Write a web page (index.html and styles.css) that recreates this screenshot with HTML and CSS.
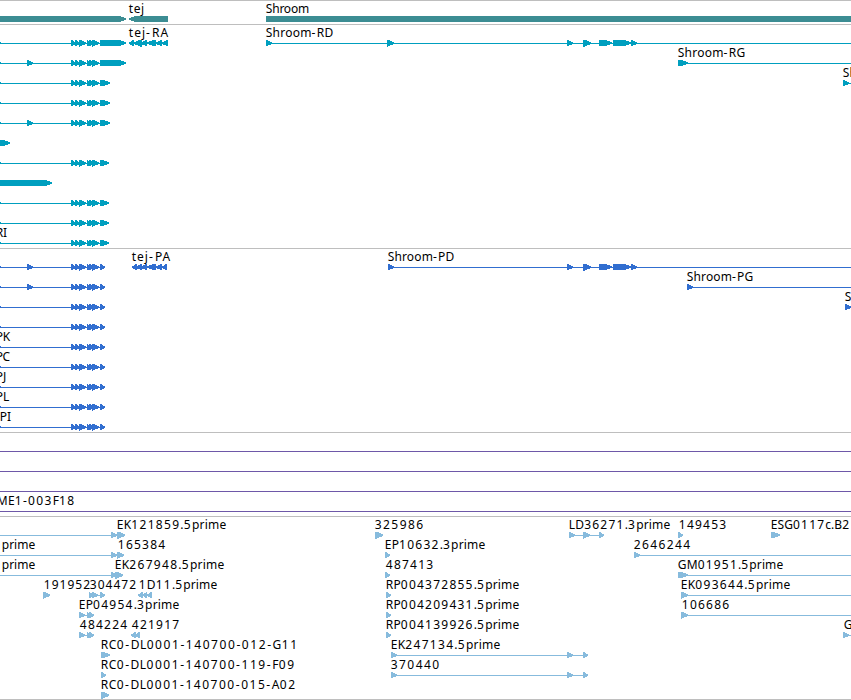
FILE: index.html
```
<!DOCTYPE html>
<html lang="en">
<head>
  <meta charset="UTF-8" />
  <title>Genome Browser - Shroom</title>
  <link rel="stylesheet" href="styles.css">
</head>
<body>

  <main class="browser">
    <section class="track gene"><svg id="gene"></svg></section>
    <section class="track mrna"><svg id="mrna"></svg></section>
    <section class="track protein"><svg id="protein"></svg></section>
    <section class="track bac"><svg id="bac"></svg></section>
    <section class="track est"><svg id="est"></svg></section>
  </main>

  <script src="script.js"></script>
</body>
</html>
```

FILE: styles.css
```
body {
  margin: 0;
  background: #fff;
  overflow: hidden;
}

.browser {
  display: flex;
  flex-direction: column;
  width: 851px;
  height: 700px;
  box-sizing: border-box;
  border-bottom: 1px solid #bebebe;
}

.track {
  box-sizing: border-box;
  border-top: 1px solid #bebebe;
  overflow: hidden;
}

.track svg {
  display: block;
  width: 100%;
  height: 100%;
  fill: currentColor;
}

.gene {
  height: 24px;
  color: #3c8d93;
}

.mrna {
  height: 224px;
  color: #009fbf;
}

.protein {
  height: 184px;
  color: #316ed0;
}

.bac {
  height: 84px;
  color: #6e58a8;
}

.est {
  flex: 1;
  color: #87bbdd;
}

.shape {
  shape-rendering: crispEdges;
}

.label {
  font-family: "Noto Sans", "Open Sans", sans-serif;
  font-size: 12px;
  fill: #000;
}

.num {
  letter-spacing: 1.1px;
}
```

FILE: script.js
```
const NS = 'http://www.w3.org/2000/svg';
const END = 860;

function add(parent, tag, attrs) {
  const el = document.createElementNS(NS, tag);
  for (const key in attrs) el.setAttribute(key, attrs[key]);
  parent.appendChild(el);
  return el;
}

// exon block with a pointed end, dir -1 points left
function exon(svg, x1, x2, y, dir) {
  const tip = Math.min(x2 - x1, 6);
  const from = dir < 0 ? x2 : x1;
  const to = dir < 0 ? x1 : x2;
  const neck = to - tip * (dir || 1);
  const half = x2 - x1 <= 8 ? 3.7 : 3;
  const top = y - half + (half > 3 ? 0.2 : 0);
  const points = `${from},${top} ${neck},${top} ${to},${y - 0.6} ${to},${y + 0.8} ${neck},${y + half} ${from},${y + half}`;
  add(svg, 'polygon', { points, class: 'shape' });
}

function label(svg, text, x, width, y) {
  const el = add(svg, 'text', { x: x + 0.8, y, class: 'label' });
  if (width) el.setAttribute('textLength', width - 0.6);
  text.split(/([\d-]+)/).forEach(part => {
    if (!part) return;
    const span = add(el, 'tspan', /[\d-]/.test(part) ? { class: 'num' } : {});
    span.textContent = part;
  });
}

// feature: row, line [x1, x2], exons [[x1, x2]], dir, name [text, x, width]
function draw(id, features) {
  const svg = document.getElementById(id);
  features.forEach(f => {
    const y = 18 + f.row * 20;
    if (f.line) {
      add(svg, 'rect', { x: f.line[0], y, width: f.line[1] - f.line[0], height: 1, class: 'shape' });
    }
    (f.exons || []).forEach(e => exon(svg, e[0], e[1], y, f.dir));
    if (f.name) label(svg, f.name[0], f.name[1], f.name[2], y - 6);
  });
}

const cluster = [[-6, 1], [71, 76], [75, 80], [79, 86], [87, 91], [89, 94], [92, 99]];
const middle = [[567, 573], [583, 591], [599, 612], [613, 631], [631, 637]];

function left(row, last, extra, name) {
  const exons = cluster.concat([[100, last]]);
  if (extra) exons.push([27, 33]);
  return { row, line: [0, 100], exons, name };
}

draw('gene', [
  { row: 0, exons: [[-10, 126]] },
  { row: 0, exons: [[129, 168]], dir: -1, name: ['tej', 128, 16] },
  { row: 0, exons: [[266, END]], name: ['Shroom', 265, 44] }
]);

draw('mrna', [
  left(0, 126),
  left(1, 126, true),
  left(2, 110),
  left(3, 110),
  left(4, 110, true),
  { row: 5, exons: [[-10, 10]] },
  left(6, 109),
  { row: 7, exons: [[-10, 52]] },
  left(8, 109),
  left(9, 109),
  left(10, 109, false, ['RI', -5, 12]),
  { row: 0, line: [129, 168], dir: -1, exons: [[129, 134], [134, 142], [141, 147], [147, 156], [156, 162], [162, 168]], name: ['tej-RA', 128, 40] },
  { row: 0, line: [266, END], exons: [[266, 272], [387, 394]].concat(middle), name: ['Shroom-RD', 265, 68] },
  { row: 1, line: [678, END], exons: [[678, 688]], name: ['Shroom-RG', 677, 68] },
  { row: 2, line: [843, END], exons: [[843, 849]], name: ['Shroom-RH', 842, 68] }
]);

draw('protein', [
  left(0, 105, true),
  left(1, 105, true),
  left(2, 105),
  left(3, 105),
  left(4, 105, false, ['PK', -5, 15]),
  left(5, 105, false, ['PC', -5, 15]),
  left(6, 105, false, ['PJ', -5, 11]),
  left(7, 105, false, ['PL', -5, 14]),
  left(8, 105, false, ['PI', -1, 12]),
  { row: 0, line: [132, 167], dir: -1, exons: [[132, 137], [136, 142], [141, 147], [147, 156], [156, 162], [162, 167]], name: ['tej-PA', 131, 39] },
  { row: 0, line: [388, END], exons: [[388, 394]].concat(middle), name: ['Shroom-PD', 387, 67] },
  { row: 1, line: [687, END], exons: [[687, 693]], name: ['Shroom-PG', 686, 67] },
  { row: 2, line: [845, END], exons: [[845, 851]], name: ['Shroom-PH', 844, 68] }
]);

draw('bac', [
  { row: 0, line: [0, END] },
  { row: 1, line: [0, END] },
  { row: 2, line: [0, END] },
  { row: 3, line: [0, END], name: ['ME1-003F18', -4, 79] }
]);

draw('est', [
  { row: 0, line: [0, 117], exons: [[111, 117], [117, 125]], name: ['EK121859.5prime', 116, 110] },
  { row: 1, line: [0, 117], exons: [[111, 117], [117, 124]], name: ['165384', 117, 49] },
  { row: 2, line: [0, 117], exons: [[111, 117], [115, 123]], name: ['EK267948.5prime', 114, 110] },
  { row: 1, name: ['prime', 1, 34] },
  { row: 2, name: ['prime', 1, 34] },
  { row: 3, exons: [[43, 50]], name: ['191952', 43, 48] },
  { row: 3, line: [89, 105], exons: [[89, 93], [92, 98], [100, 105]], name: ['304472', 89, 48] },
  { row: 3, dir: -1, exons: [[138, 143], [143, 147], [147, 152]], name: ['1D11.5prime', 138, 79] },
  { row: 4, line: [79, 94], exons: [[79, 85], [87, 91], [89, 94]], name: ['EP04954.3prime', 78, 101] },
  { row: 5, line: [79, 94], exons: [[79, 85], [87, 91], [89, 94]], name: ['484224', 79, 49] },
  { row: 5, dir: -1, exons: [[131, 136], [135, 140]], name: ['421917', 131, 49] },
  { row: 6, exons: [[101, 110]], name: ['RC0-DL0001-140700-012-G11', 100, 198] },
  { row: 7, exons: [[101, 106]], name: ['RC0-DL0001-140700-119-F09', 100, 195] },
  { row: 8, exons: [[101, 109]], name: ['RC0-DL0001-140700-015-A02', 100, 196] },
  { row: 0, exons: [[375, 383]], name: ['325986', 374, 50] },
  { row: 1, exons: [[385, 390]], name: ['EP10632.3prime', 384, 101] },
  { row: 2, exons: [[385, 390]], name: ['487413', 385, 49] },
  { row: 3, exons: [[386, 391]], name: ['RP004372855.5prime', 385, 134] },
  { row: 4, exons: [[386, 391]], name: ['RP004209431.5prime', 385, 134] },
  { row: 5, exons: [[386, 391]], name: ['RP004139926.5prime', 385, 134] },
  { row: 6, line: [391, 588], exons: [[391, 397], [567, 573], [583, 588]], name: ['EK247134.5prime', 390, 110] },
  { row: 7, line: [391, 588], exons: [[391, 397], [567, 573], [583, 588]], name: ['370440', 390, 50] },
  { row: 0, line: [569, 604], exons: [[569, 575], [583, 590], [599, 604]], name: ['LD36271.3prime', 568, 102] },
  { row: 0, exons: [[678, 683]], name: ['149453', 678, 49] },
  { row: 0, exons: [[771, 780]], name: ['ESG0117c.B2', 770, 80] },
  { row: 1, line: [634, END], exons: [[634, 640]], name: ['2646244', 633, 58] },
  { row: 2, line: [678, END], exons: [[678, 688]], name: ['GM01951.5prime', 677, 106] },
  { row: 3, line: [681, END], exons: [[681, 688]], name: ['EK093644.5prime', 680, 110] },
  { row: 4, line: [681, END], exons: [[681, 688]], name: ['106686', 681, 49] },
  { row: 5, line: [843, END], exons: [[843, 849]], name: ['GH', 843] }
]);
```
